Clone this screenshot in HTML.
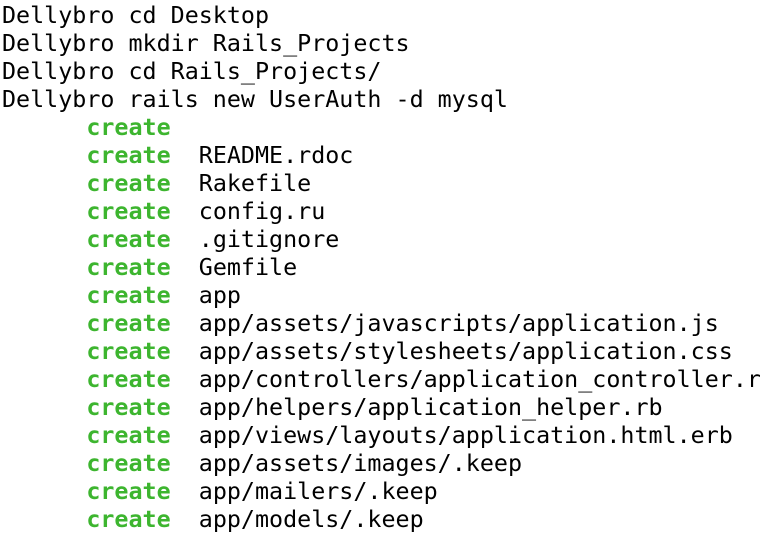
<html><head><style>
body{margin:0;background:#fff;width:760px;height:542px;overflow:hidden}
pre{margin:0;position:absolute;left:2px;top:1px;font-family:"DejaVu Sans Mono","Liberation Mono",monospace;font-size:23.35px;line-height:28px;color:#000;letter-spacing:0}
b{color:#3db52f}
</style></head><body><pre>Dellybro cd Desktop
Dellybro mkdir Rails_Projects
Dellybro cd Rails_Projects/
Dellybro rails new UserAuth -d mysql
      <b>create</b>
      <b>create</b>  README.rdoc
      <b>create</b>  Rakefile
      <b>create</b>  config.ru
      <b>create</b>  .gitignore
      <b>create</b>  Gemfile
      <b>create</b>  app
      <b>create</b>  app/assets/javascripts/application.js
      <b>create</b>  app/assets/stylesheets/application.css
      <b>create</b>  app/controllers/application_controller.rb
      <b>create</b>  app/helpers/application_helper.rb
      <b>create</b>  app/views/layouts/application.html.erb
      <b>create</b>  app/assets/images/.keep
      <b>create</b>  app/mailers/.keep
      <b>create</b>  app/models/.keep
</pre></body></html>
